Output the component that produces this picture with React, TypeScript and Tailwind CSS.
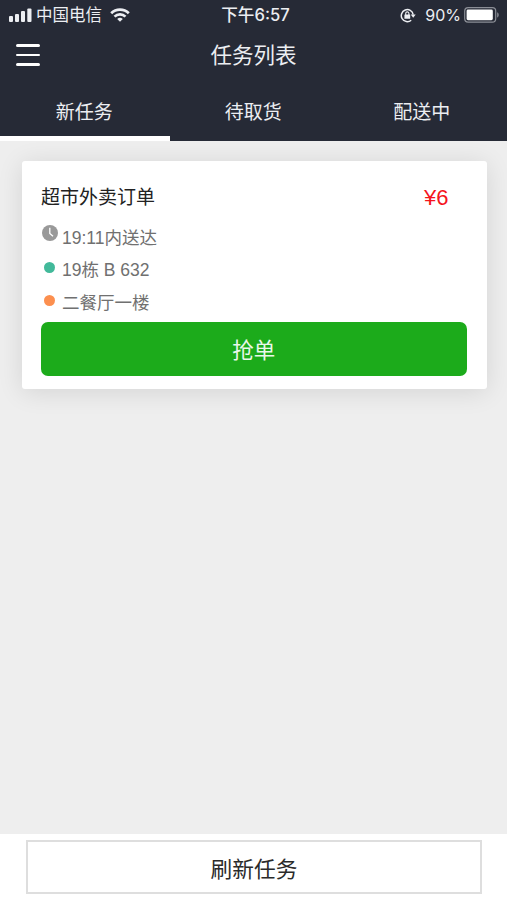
import { useState } from 'react';

const TABS = ['新任务', '待取货', '配送中'];

const FONT = "font-['Liberation_Sans','Noto_Sans_CJK_SC',sans-serif]";

function SignalIcon() {
  return (
    <svg width="23" height="14" viewBox="0 0 23 14" fill="currentColor">
      <rect x="0" y="8" width="4" height="6" rx="1" />
      <rect x="6" y="6" width="4" height="8" rx="1" />
      <rect x="12" y="3" width="4" height="11" rx="1" />
      <rect x="18.3" y="0.5" width="4.2" height="13.5" rx="1" />
    </svg>
  );
}

function WifiIcon() {
  return (
    <svg width="20" height="14" viewBox="0 0 20 14" fill="none" stroke="currentColor" strokeWidth="2.7">
      <path d="M1.2 5.2a12.4 12.4 0 0 1 17.6 0" />
      <path d="M4.5 8.6a7.8 7.8 0 0 1 11 0" />
      <path d="M10 13.8 7.2 11a4 4 0 0 1 5.6 0z" fill="currentColor" stroke="none" />
    </svg>
  );
}

function RotationLockIcon() {
  return (
    <svg width="16" height="15" viewBox="0 0 16 15" fill="none" stroke="currentColor">
      <path d="M11.2 12.2A6 6 0 1 1 13.2 6.6" strokeWidth="1.5" />
      <path d="M10.7 6.5h5l-2.5 3.3z" fill="currentColor" stroke="none" />
      <rect x="4.4" y="6.6" width="5.8" height="4.2" rx="0.5" fill="currentColor" stroke="none" />
      <path d="M5.7 7V5.5a1.6 1.6 0 0 1 3.2 0V7" strokeWidth="1.1" />
    </svg>
  );
}

function BatteryIcon() {
  return (
    <svg width="36" height="16" viewBox="0 0 36 16" fill="none">
      <rect x="0.7" y="0.7" width="31" height="14.4" rx="3.4" stroke="#8b8e96" strokeWidth="1.2" />
      <rect x="2.6" y="2.6" width="26.2" height="10.6" rx="1.4" fill="#fff" />
      <path d="M33.2 5.2c2 .8 2 4.6 0 5.4z" fill="#8b8e96" />
    </svg>
  );
}

function ClockIcon() {
  return (
    <svg width="16" height="16" viewBox="0 0 16 16" fill="none">
      <circle cx="8" cy="8" r="8" fill="#999" />
      <path d="M7.8 2.8v5.6l3.2 2.8" stroke="#fff" strokeWidth="1.3" />
    </svg>
  );
}

function StatusBar() {
  return (
    <div className="grid h-[30px] grid-cols-3 items-center pr-[7px] pl-[9px] text-[16.5px] leading-[30px]">
      <div className="flex items-center">
        <SignalIcon />
        <span className="ml-1 whitespace-nowrap">中国电信</span>
        <span className="ml-[8px]">
          <WifiIcon />
        </span>
      </div>
      <div className="pl-0.5 text-center font-['Inter','Noto_Sans_CJK_SC',sans-serif] text-[16.6px] font-medium whitespace-nowrap">
        下午6:57
      </div>
      <div className="flex items-center justify-end">
        <RotationLockIcon />
        <span className="mr-[3px] ml-[9px] font-['Inter',sans-serif] text-[16px]">90%</span>
        <BatteryIcon />
      </div>
    </div>
  );
}

export default function App() {
  const [active, setActive] = useState(0);

  return (
    <div className={`flex h-[900px] w-[507px] flex-col overflow-hidden bg-[#eee] ${FONT}`}>
      <header className="flex h-[141px] shrink-0 flex-col bg-[#262a36] text-[#eceef2]">
        <StatusBar />
        <div className="grid h-[50px] grid-cols-[1fr_auto_1fr] items-start px-4">
          <button className="mt-3.5 flex w-6 flex-col gap-[7px]" aria-label="菜单">
            <span className="h-[2.5px] rounded-full bg-white" />
            <span className="h-[2.5px] rounded-full bg-white" />
            <span className="h-[2.5px] rounded-full bg-white" />
          </button>
          <h1 className="pt-px text-[21.5px] leading-[50px]">任务列表</h1>
        </div>
        <nav className="grid flex-1 grid-cols-[170px_1fr_169px]">
          {TABS.map((tab, i) => (
            <button
              key={tab}
              onClick={() => setActive(i)}
              className={`border-b-[5px] pt-[11px] pr-[1.5px] text-[19px] ${i === active ? 'border-white' : 'border-transparent'}`}
            >
              {tab}
            </button>
          ))}
        </nav>
      </header>

      <main className="flex-1 pt-5 pr-5 pl-[21.5px]">
        <section className="h-[228px] rounded-[3px] bg-white pt-[21px] pr-[20.5px] pl-[19.5px] shadow-[0_3px_26px_rgba(0,0,0,0.11)]">
          <div className="flex h-8 items-center justify-between pr-[18px]">
            <h2 className="text-[19px] text-[#222]">超市外卖订单</h2>
            <span className="-mt-0.5 text-[22px] text-[#f5141c]">¥6</span>
          </div>
          <ul className="mt-2 text-[17.5px] leading-[32.4px] text-[#707070]">
            <li className="flex h-[32.4px]">
              <span className="w-[21px] pt-[3px] pl-[0.5px]">
                <ClockIcon />
              </span>
              19:11内送达
            </li>
            <li className="flex h-[32.4px]">
              <span className="w-[21px] pt-2 pl-[3px]">
                <i className="block size-[11px] rounded-full bg-[#42b99a]" />
              </span>
              19栋 B 632
            </li>
            <li className="flex h-[32.4px]">
              <span className="w-[21px] pt-2 pl-[3px]">
                <i className="block size-[11px] rounded-full bg-[#fc8f4f]" />
              </span>
              二餐厅一楼
            </li>
          </ul>
          <button className="mt-[2.5px] h-[54px] w-full rounded-[7px] bg-[#1cab1b] pt-1 text-[21.5px] text-[#eaf8ea]">
            抢单
          </button>
        </section>
      </main>

      <footer className="h-[66px] shrink-0 bg-white pt-1.5 pr-[25px] pl-[26px]">
        <button className="h-[54px] w-full border-2 border-[#dedede] pt-[7px] text-[21.7px] text-[#2a2a2a]">
          刷新任务
        </button>
      </footer>
    </div>
  );
}
